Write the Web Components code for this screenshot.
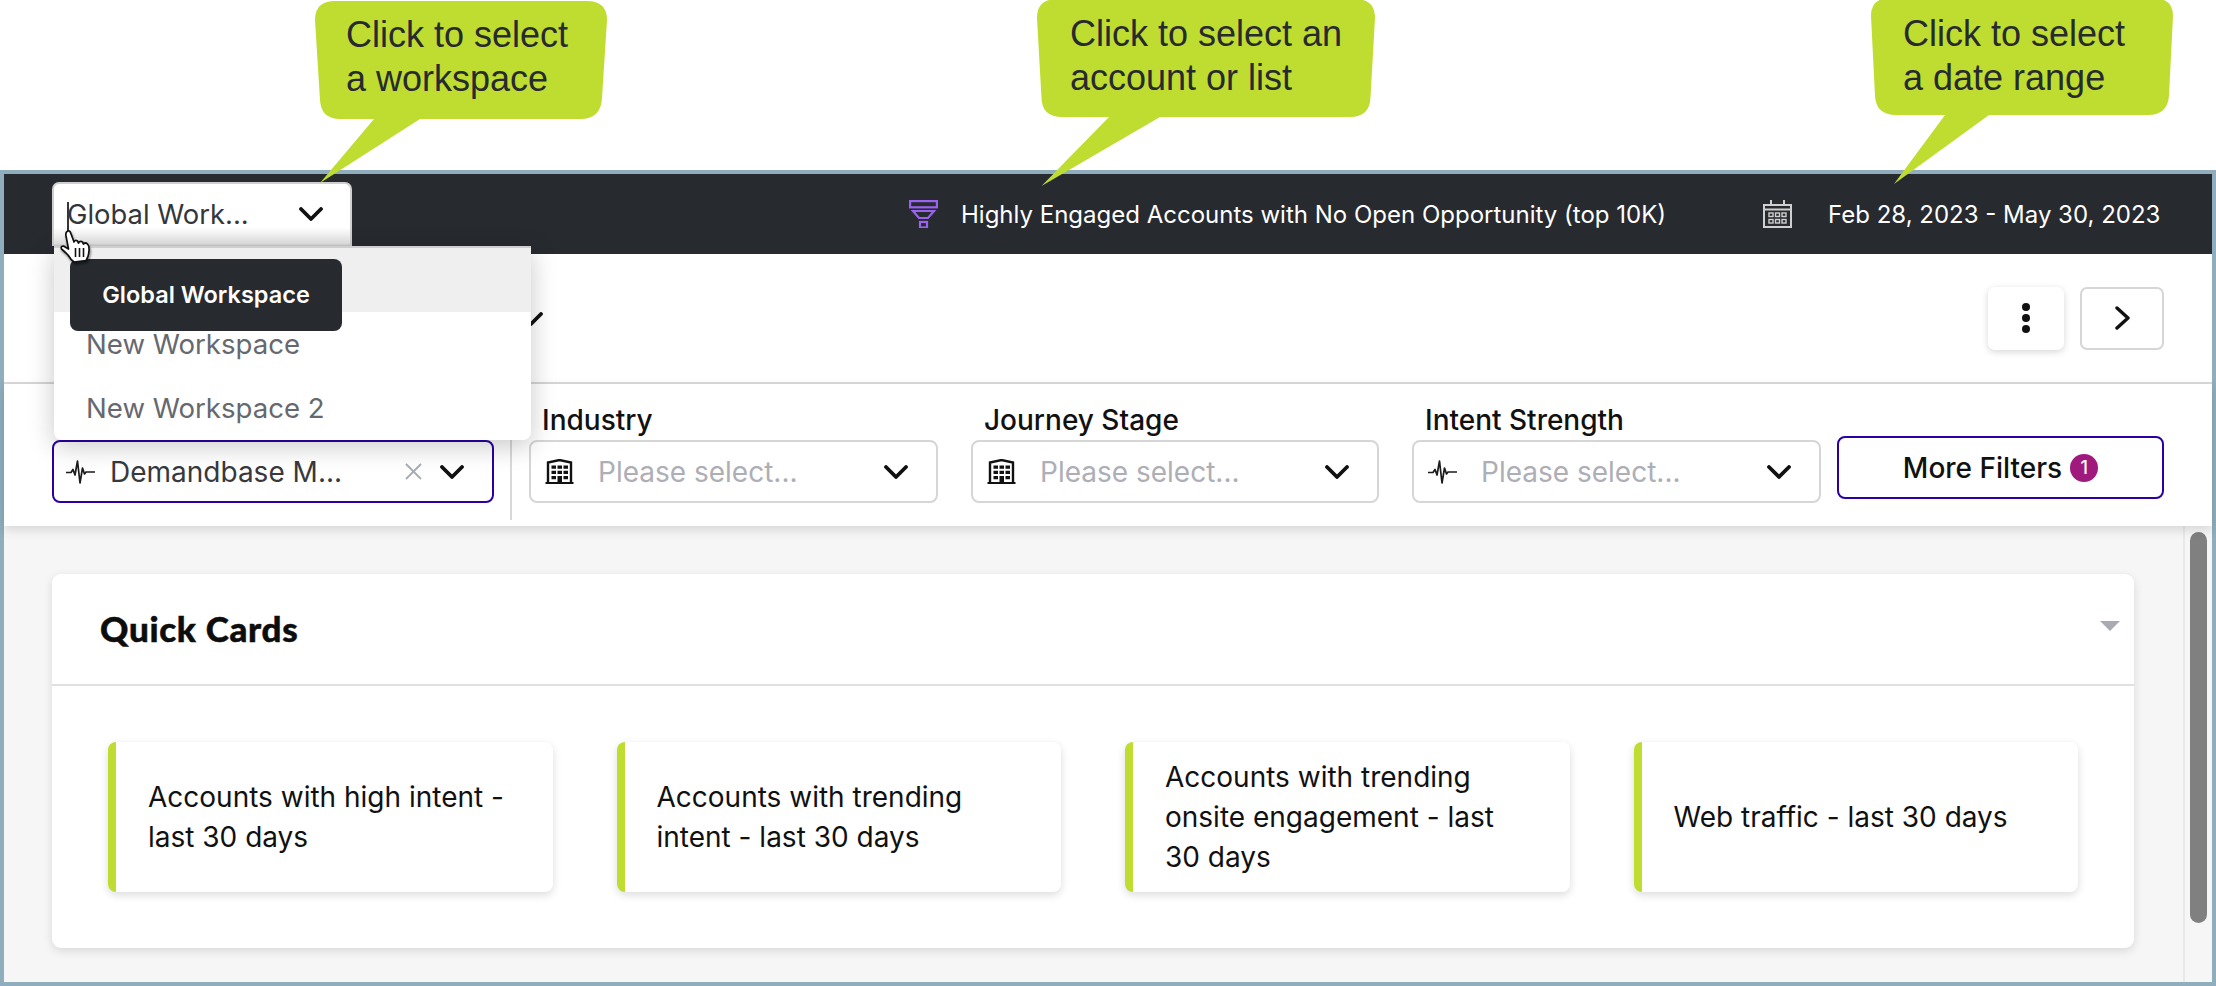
<!DOCTYPE html>
<html lang="en"><head><meta charset="utf-8"><title>Workspace</title>
<style>
html,body{margin:0;padding:0;background:#fff;font-family:Inter,"Liberation Sans",sans-serif;}
body{width:2216px;height:986px;overflow:hidden;position:relative;}
</style></head><body>
<app-shell>
  <top-bar>
    <workspace-select></workspace-select>
  </top-bar>
  <title-row></title-row>
  <filter-row>
    <filter-select style="width:442px" icon="pulse" active clear text="Demandbase M..."></filter-select>
    <v-rule></v-rule>
    <filter-select style="width:409px" icon="building" label="Industry" text="Please select..."></filter-select>
    <filter-select style="width:408px;margin-left:33px" icon="building" label="Journey Stage" text="Please select..."></filter-select>
    <filter-select style="width:409px;margin-left:33px" icon="pulse" label="Intent Strength" text="Please select..."></filter-select>
    <more-filters></more-filters>
  </filter-row>
  <main-area>
    <quick-panel title="Quick Cards">
      <quick-card>Accounts with high intent - last 30 days</quick-card>
      <quick-card>Accounts with trending intent - last 30 days</quick-card>
      <quick-card>Accounts with trending onsite engagement - last 30 days</quick-card>
      <quick-card>Web traffic - last 30 days</quick-card>
    </quick-panel>
  </main-area>
</app-shell>
<call-out x="346" y="13" d="M335,1 H587 Q607,1 607,20 L602,98 Q601,119 580,119 H420 L320,183 L374,119 H340 Q321,119 320,100 L315,20 Q315,1 335,1 Z">Click to select<br>a workspace</call-out>
<call-out x="1070" y="12" d="M1057,-1 H1355 Q1375,-1 1375,18 L1370.5,97 Q1370,117 1350,117 H1160 L1041.5,186 L1109,117 H1062 Q1042,117 1041.5,98 L1037,18 Q1037,-1 1057,-1 Z">Click to select an<br>account or list</call-out>
<call-out x="1903" y="12" d="M1890,-2 H2153 Q2173,-2 2173,16 L2169,95 Q2168,115 2148,115 H1989 L1894,184 L1945,115 H1896 Q1876,115 1875,96 L1871,16 Q1871,-2 1890,-2 Z">Click to select<br>a date range</call-out>
<script>
const chev=(w=24,h=14,sw=3.6,c='#111')=>`<svg width="${w}" height="${h}" viewBox="0 0 24 14" preserveAspectRatio="none" style="display:block;flex:none"><path d="M2 2 L12 12 L22 2" fill="none" stroke="${c}" stroke-width="${sw}" stroke-linecap="round" stroke-linejoin="round"/></svg>`;
const icons={
 pulse:`<svg width="29" height="24" viewBox="0 0 29 24" style="display:block;flex:none"><path d="M0 12.5 H5 L7 9.5 L9 15 L11.5 1 L14 23 L16.5 8 L18.5 14 L20 12 H29" fill="none" stroke="#1b1b1b" stroke-width="1.7" stroke-linejoin="round"/></svg>`,
 building:`<svg width="29" height="25" viewBox="0 0 29 25" style="display:block;flex:none"><path d="M3 24 V3.5 L14.5 1 L26 3.5 V24" fill="none" stroke="#111" stroke-width="2.4"/><path d="M0.5 24 H28.5" stroke="#111" stroke-width="2"/><path fill="#111" d="M6.5 6.5h4.5v3.2H6.5zM12.5 6.5h4.5v3.2h-4.5zM18.5 6.5h4.5v3.2h-4.5zM6.5 11.7h4.5v3.2H6.5zM12.5 11.7h4.5v3.2h-4.5zM18.5 11.7h4.5v3.2h-4.5zM6.5 17h4.5v3.2H6.5zM18.5 17h4.5v3.2h-4.5zM12.5 17h4.5v7h-4.5z"/></svg>`
};
function def(name,html,init){customElements.define(name,class extends HTMLElement{constructor(){super();this.attachShadow({mode:'open'});}connectedCallback(){this.shadowRoot.innerHTML=typeof html==='function'?html(this):html;}});}

def('app-shell',`<style>:host{display:flex;flex-direction:column;box-sizing:border-box;margin-top:170px;width:2216px;height:816px;border:4px solid #8fadbd;background:#fff;position:relative}</style><slot></slot>`);

def('top-bar',()=>`<style>:host{display:flex;align-items:flex-start;height:80px;flex:none;background:#272a2f;color:#fff;position:relative;z-index:5;font-size:24px}
.g{display:flex;align-items:center;height:80px}.a{margin-left:557px}.t{margin-left:23px}.c{margin-left:97px}.d{margin-left:36px}span{white-space:nowrap}</style>
<slot></slot>
<div class="g a"><svg width="29" height="28" viewBox="0 0 29 28" style="display:block"><g fill="none" stroke="#9a62f0" stroke-width="2.2"><rect x="1.1" y="1.1" width="26.8" height="6.2"/><path d="M4 11 H25 L19 18 H10 Z"/><rect x="11" y="22" width="7" height="5.5"/></g></svg>
<span class="t">Highly Engaged Accounts with No Open Opportunity (top 10K)</span></div>
<div class="g c"><svg width="29" height="28" viewBox="0 0 29 28" style="display:block"><g fill="none" stroke="#cfcfcf" stroke-width="2"><rect x="1" y="5" width="27" height="22"/><path d="M8 0V5M21 0V5"/><path d="M1 9.5H28" /></g><g fill="none" stroke="#cfcfcf" stroke-width="1.4"><rect x="6" y="13" width="4" height="3.5"/><rect x="12.5" y="13" width="4" height="3.5"/><rect x="19" y="13" width="4" height="3.5"/><rect x="6" y="19.5" width="4" height="3.5"/><rect x="12.5" y="19.5" width="4" height="3.5"/><rect x="19" y="19.5" width="4" height="3.5"/></g></svg>
<span class="d">Feb 28, 2023 - May 30, 2023</span></div>`);

def('workspace-select',()=>`<style>:host{display:block;position:relative;box-sizing:border-box;width:300px;height:64px;margin:8px 0 0 48px;color:#34363a;font-size:27.4px}
.box{box-sizing:border-box;height:64px;border:2px solid #cfcfcf;border-bottom:0;border-radius:7px 7px 0 0;background:linear-gradient(#fff 70%,#e4e4e4 96%,#c8c8c8);display:flex;align-items:center;justify-content:space-between;padding:0 27px 2px 13px;position:relative}
.caret{position:absolute;left:13px;top:18px;width:2px;height:30px;background:#34363a}
.menu{position:absolute;left:2px;top:64px;width:477px;height:194px;background:#fff;border-top:2px solid #cfcfcf;border-radius:0 0 8px 8px;box-shadow:0 6px 26px rgba(0,0,0,.22);box-sizing:border-box;color:#66686e;font-size:27.6px}
.row{height:64px;padding-left:32px;display:flex;align-items:center}
.row.sel{height:64px;background:#efefef}
.row.n{margin-top:0;height:64px}
.tip{position:absolute;left:16px;top:11px;width:272px;height:72px;border-radius:8px;background:#272a2f;color:#fff;font-size:23.5px;font-weight:600;display:flex;align-items:center;justify-content:center;padding-bottom:2px;box-sizing:border-box}
.hand{position:absolute;left:8px;top:47px;z-index:3;filter:drop-shadow(1px 2px 1px rgba(0,0,0,.45))}</style>
<div class="box"><span>Global Work...</span>${chev(24,14,3.8)}<i class="caret"></i></div>
<div class="menu"><div class="row sel"></div><div class="row n">New Workspace</div><div class="row n">New Workspace 2</div><div class="tip">Global Workspace</div></div>
<svg class="hand" width="32" height="34" viewBox="0 0 32 34"><path d="M6.5 3 Q9 0.5 10.5 3.5 L14 13 Q15 10.5 17.5 12 L18.5 14 Q20 11.5 22.5 13 L23.5 15 Q25.5 13 27.5 15 Q29.5 17 29 22 Q28.5 28 26 31.5 L14 33 Q11 31 8 26 Q4 22 1.5 20 Q0.5 17 3.5 17 L8.5 20 L6 7 Q5.5 4.5 6.5 3 Z" fill="#fff" stroke="#111" stroke-width="1.7" stroke-linejoin="round"/><path d="M15.5 19V28M19.5 19V28M23.5 19V28" stroke="#111" stroke-width="1.6"/></svg>`);

def('title-row',()=>`<style>:host{display:flex;align-items:center;box-sizing:border-box;height:130px;flex:none;border-bottom:2px solid #d9d9d9;background:#fff;position:relative;padding:0 48px 0 515px}
.k,.n{box-sizing:border-box;height:63px;display:flex;align-items:center;justify-content:center;border-radius:7px;background:#fff}
.k{width:76px;margin-left:auto;box-shadow:0 2px 7px rgba(0,0,0,.16)}
.n{width:84px;margin-left:16px;border:2px solid #d6d6d6;padding-left:2px}
.sp{margin-top:2px}</style>
<div class="sp">${chev(24,14,3.8)}</div>
<div class="k"><svg width="10" height="32" viewBox="0 0 10 32" style="display:block"><circle cx="5" cy="5" r="4" fill="#111"/><circle cx="5" cy="16" r="4" fill="#111"/><circle cx="5" cy="27" r="4" fill="#111"/></svg></div>
<div class="n"><svg width="16" height="24" viewBox="0 0 16 24" style="display:block"><path d="M2 2 L13 12 L2 22" fill="none" stroke="#111" stroke-width="3.4" stroke-linecap="round" stroke-linejoin="round"/></svg></div>`);

def('filter-row',`<style>:host{display:flex;align-items:flex-start;box-sizing:border-box;height:142px;flex:none;padding:20px 0 0 48px;background:#fff;position:relative;z-index:2;box-shadow:0 4px 10px rgba(0,0,0,.13)}</style><slot></slot>`);

def('v-rule',`<style>:host{display:block;width:2px;height:80px;margin:36px 17px 0 16px;background:#d9d9d9;flex:none}</style>`);

def('filter-select',el=>{const a=el.hasAttribute('active'),ph=!a;return `<style>:host{display:block;flex:none;color:#111}
.l{height:32px;line-height:32px;margin:0 0 4px 13px;font-size:28px;font-weight:500;white-space:nowrap}
.b{box-sizing:border-box;height:63px;border:2px solid ${a?'#2a00a6':'#d6d6d6'};border-radius:8px;background:#fff;display:flex;align-items:center;padding:0 28px 0 ${a?12:14}px;font-size:28px}
.t{margin-left:${a?15:24}px;color:${ph?'#aeaeb6':'#37393d'};flex:1;white-space:nowrap}
.x{margin-right:18px;display:block}</style>
<div class="l">${el.getAttribute('label')||'&nbsp;'}</div>
<div class="b">${icons[el.getAttribute('icon')]}<span class="t">${el.getAttribute('text')}</span>${el.hasAttribute('clear')?`<svg class="x" width="17" height="17" viewBox="0 0 17 17"><path d="M1 1L16 16M16 1L1 16" stroke="#a9abb3" stroke-width="1.8"/></svg>`:''}${chev(24,14,3.8)}</div>`});

def('more-filters',`<style>:host{box-sizing:border-box;display:flex;align-items:center;justify-content:center;flex:none;width:327px;height:63px;margin:32px 0 0 16px;border:2px solid #2a00a6;border-radius:8px;background:#fff;color:#111;font-size:28px;font-weight:500}
b{display:flex;align-items:center;justify-content:center;width:28px;height:28px;margin-left:8px;border-radius:50%;background:#a01a7d;color:#fff;font-size:18px;font-weight:500}</style><span>More Filters</span><b>1</b>`);

def('main-area',`<style>:host{display:flex;flex:1;min-height:0;background:#f7f6f7;position:relative}
.c{flex:1;padding:48px 49px 0 48px;min-width:0}
.s{flex:none;box-sizing:border-box;width:29px;border-left:2px solid #e9e9ea;padding:6px 5px 0 5px}
.th{width:17px;height:391px;border-radius:9px;background:#808080}</style><div class="c"><slot></slot></div><div class="s"><div class="th"></div></div>`);

def('quick-panel',el=>`<style>:host{display:block;box-sizing:border-box;height:374px;background:#fff;border-radius:9px;box-shadow:0 3px 10px rgba(0,0,0,.12)}
.h{box-sizing:border-box;height:112px;border-bottom:2px solid #e0e0e0;display:flex;align-items:center;justify-content:space-between;padding:0 14px 2px 48px;font-family:Lato,Inter,sans-serif;font-weight:900;font-size:35px;letter-spacing:.7px;color:#0d0d0d;-webkit-text-stroke:.5px #0d0d0d}
.g{display:grid;grid-template-columns:repeat(4,1fr);gap:64px;padding:56px 56px 0 56px}
.tr{margin-top:-4px;display:block}</style>
<div class="h"><span>${el.getAttribute('title')}</span><svg class="tr" width="20" height="10" viewBox="0 0 20 10"><path d="M0 0H20L10 10Z" fill="#a9abb3"/></svg></div><div class="g"><slot></slot></div>`);

def('quick-card',`<style>:host{box-sizing:border-box;display:flex;align-items:center;height:150px;border-left:8px solid #bfdc30;border-radius:8px;background:#fff;box-shadow:0 3px 9px rgba(0,0,0,.14);padding:0 40px 0 32px;font-size:28px;line-height:40px;color:#111}</style><div><slot></slot></div>`);

def('call-out',el=>{const x=+el.getAttribute('x'),y=+el.getAttribute('y');return `<style>:host{position:absolute;left:0;top:0;display:block;z-index:10;font-family:"Liberation Sans",Arial,sans-serif;font-size:36px;line-height:43.5px;color:#272a2f}
svg{position:absolute;left:0;top:0;overflow:visible}.t{position:absolute;left:${x}px;top:${y}px;white-space:nowrap}</style>
<svg width="1" height="1"><path d="${el.getAttribute('d')}" fill="#bfdc30"/></svg><div class="t"><slot></slot></div>`});
</script>
</body></html>
